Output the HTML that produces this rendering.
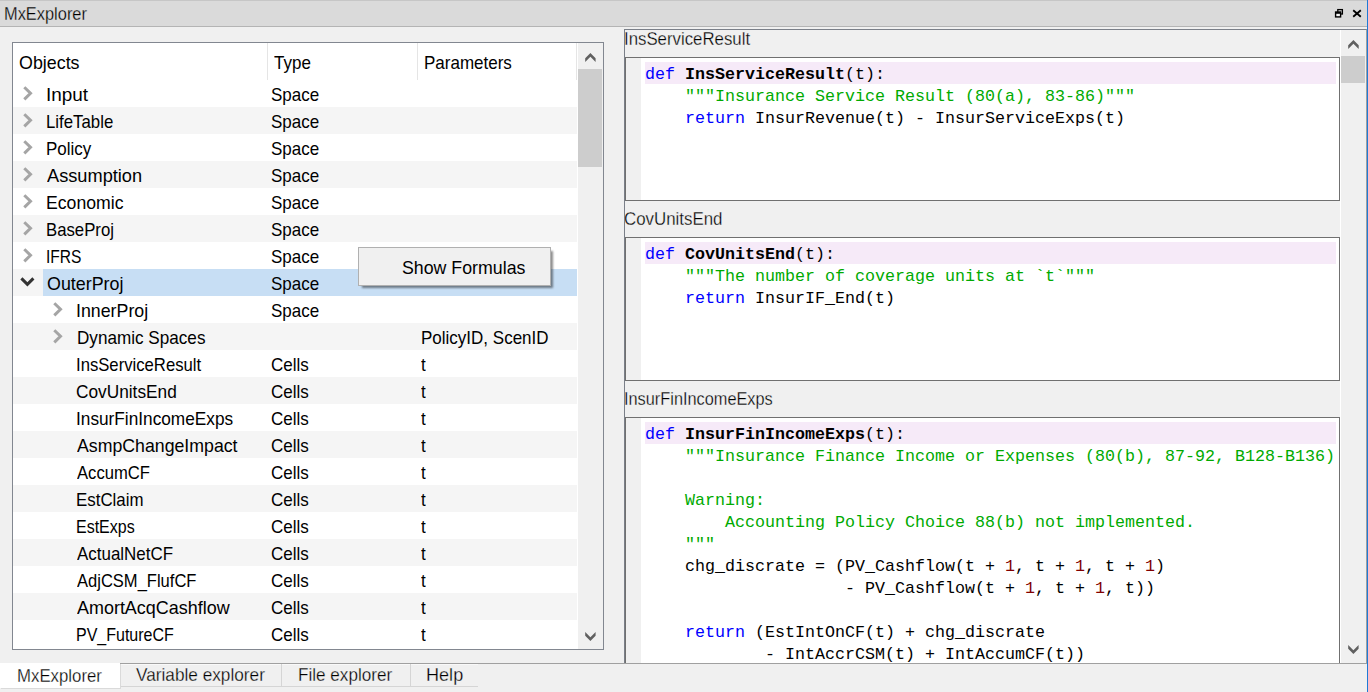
<!DOCTYPE html>
<html><head><meta charset="utf-8"><style>
*{box-sizing:border-box}
html,body{margin:0;padding:0}
body{width:1368px;height:692px;overflow:hidden;position:relative;background:#f0f0f0;font-family:"Liberation Sans",sans-serif;color:#000}
.abs{position:absolute}
#title{position:absolute;left:0;top:0;width:1367px;height:27px;background:#dadada;border-top:1px solid #c6c6c6;border-bottom:1px solid #b4b4b4}
#title .tx{position:absolute;left:4px;top:0px;font-size:16px;line-height:22px;color:#000;-webkit-text-stroke:0.25px #dadada;transform:scale(1.025,1.16);transform-origin:0 0}
#blue{position:absolute;left:1367px;top:0;width:1px;height:692px;background:#1f7ad6}
#tree{position:absolute;left:12px;top:42px;width:592px;height:608px;border:1px solid #828790;background:#fff;overflow:hidden}
#hdr{position:absolute;left:0;top:0;width:565px;height:37px;background:#fff}
#hdr .t{position:absolute;top:10px;transform:scaleY(1.08);transform-origin:0 0;font-size:17px;line-height:20px}
.csep{position:absolute;top:0;width:1px;height:37px;background:#e5e5e5}
.row{position:absolute;left:0;width:564px;height:27px;background:#fff}
.row.alt{background:#f5f5f5}
.row .t{position:absolute;top:5px;transform:scaleY(1.08);transform-origin:0 0;font-size:17px;line-height:20px;white-space:pre}
.sel{position:absolute;left:30px;top:0;width:534px;height:27px;background:#c7def4}
.ar{position:absolute;top:6px}
#vs1{position:absolute;left:565px;top:0;width:25px;height:606px;background:#f0f0f0}
#th1{position:absolute;left:0;top:26px;width:24px;height:98px;background:#cdcdcd}
#menu{position:absolute;left:358px;top:247px;width:193px;height:39px;background:#f0f0f0;border:1px solid #b0b0b0;box-shadow:3px 3px 2px -1px rgba(0,0,0,0.45)}
#menu .t{position:absolute;left:43px;top:10px;transform:scaleY(1.08);transform-origin:0 0;font-size:17px;line-height:20px}
#rp{position:absolute;left:624px;top:29px;width:743px;height:635px;border:1px solid #7a7f88;border-right:1px solid #a0a0a0;background:#f0f0f0}
.lbl{position:absolute;left:0px;font-size:16px;line-height:20px;white-space:pre;transform:scaleY(1.16);transform-origin:0 0;color:#000;-webkit-text-stroke:0.25px #f0f0f0}
.ed{position:absolute;left:0px;width:715px;border:1px solid #707070;background:#fff;overflow:hidden}
.gut{position:absolute;left:0;top:0;width:15px;height:100%;background:#f0f0f0}
.hl{position:absolute;left:19px;top:4px;width:691px;height:22px;background:#f6eaf8}
.code{position:absolute;left:19px;top:6px;margin:0;font-family:"Liberation Mono",monospace;font-size:17px;transform:scaleX(0.98039);transform-origin:0 0;line-height:22px;color:#000;white-space:pre}
.k{color:#0000ff;font-weight:normal}
.d{font-weight:bold}
.s{color:#00aa00;font-style:normal}
.n{color:#800000;font-style:normal}
#vs2{position:absolute;left:715px;top:0;width:26px;height:633px;background:#f0f0f0;border-left:1px solid #fff}
#th2{position:absolute;left:0px;top:26px;width:24px;height:27px;background:#cdcdcd}
#tabline{position:absolute;left:0;top:663px;width:1367px;height:1px;background:#a0a0a0}
.tab{position:absolute;top:663px;height:24px;border-top:1px solid #a0a0a0;border-bottom:1px solid #d5d5d5;background:#f0f0f0;box-shadow:inset 0 1px 0 #f9f9f9}
.tab .t{position:absolute;top:0px;font-size:16px;line-height:20px;white-space:pre;color:#000;-webkit-text-stroke:0.25px #f0f0f0;transform-origin:0 0}
#tab0{left:0;width:120px;height:25px;background:#fff;border:none;box-shadow:1px 1px 0 #dadada}
#tab0 .t{-webkit-text-stroke:0.25px #fff}
</style></head><body>
<div id="title"><span class="tx">MxExplorer</span>
<svg class="abs" style="left:1334px;top:7px" width="11" height="11" viewBox="0 0 11 11"><rect x="3.8" y="1.6" width="4.6" height="4.4" fill="none" stroke="#000" stroke-width="1.3"/><rect x="0.9" y="3.3" width="6.4" height="6.3" fill="#000"/><rect x="2.3" y="5.8" width="3.6" height="2.4" fill="#f4f4f4"/></svg>
<svg class="abs" style="left:1352px;top:8px" width="10" height="9" viewBox="0 0 10 9"><path d="M1.2 1.2L8.8 7.8M8.8 1.2L1.2 7.8" stroke="#000" stroke-width="1.8"/></svg>
</div>
<div id="blue"></div>
<div id="tree">
 <div id="hdr">
  <span class="t" style="left:6px;transform:scale(1.05,1.08)">Objects</span>
  <span class="t" style="left:261px">Type</span>
  <span class="t" style="left:411px">Parameters</span>
  <div class="csep" style="left:254px"></div>
  <div class="csep" style="left:404px"></div>
  <div class="csep" style="left:563px"></div>
 </div>
 <div class="row" style="top:37px"><svg class="ar" style="left:10px" width="12" height="16" viewBox="0 0 12 16"><path d="M1.3 1.2 L7.5 7.3 L1.3 13.4" fill="none" stroke="#a5a5a5" stroke-width="3"/></svg><span class="t" style="left:33.22px;transform:scale(1.1136,1.08)">Input</span><span class="t" style="left:258px">Space</span></div><div class="row alt" style="top:64px"><svg class="ar" style="left:10px" width="12" height="16" viewBox="0 0 12 16"><path d="M1.3 1.2 L7.5 7.3 L1.3 13.4" fill="none" stroke="#a5a5a5" stroke-width="3"/></svg><span class="t" style="left:33.20px;transform:scale(0.9878,1.08)">LifeTable</span><span class="t" style="left:258px">Space</span></div><div class="row" style="top:91px"><svg class="ar" style="left:10px" width="12" height="16" viewBox="0 0 12 16"><path d="M1.3 1.2 L7.5 7.3 L1.3 13.4" fill="none" stroke="#a5a5a5" stroke-width="3"/></svg><span class="t" style="left:32.96px;transform:scale(0.9980,1.08)">Policy</span><span class="t" style="left:258px">Space</span></div><div class="row alt" style="top:118px"><svg class="ar" style="left:10px" width="12" height="16" viewBox="0 0 12 16"><path d="M1.3 1.2 L7.5 7.3 L1.3 13.4" fill="none" stroke="#a5a5a5" stroke-width="3"/></svg><span class="t" style="left:34.10px;transform:scale(1.0709,1.08)">Assumption</span><span class="t" style="left:258px">Space</span></div><div class="row" style="top:145px"><svg class="ar" style="left:10px" width="12" height="16" viewBox="0 0 12 16"><path d="M1.3 1.2 L7.5 7.3 L1.3 13.4" fill="none" stroke="#a5a5a5" stroke-width="3"/></svg><span class="t" style="left:32.91px;transform:scale(1.0377,1.08)">Economic</span><span class="t" style="left:258px">Space</span></div><div class="row alt" style="top:172px"><svg class="ar" style="left:10px" width="12" height="16" viewBox="0 0 12 16"><path d="M1.3 1.2 L7.5 7.3 L1.3 13.4" fill="none" stroke="#a5a5a5" stroke-width="3"/></svg><span class="t" style="left:33.00px;transform:scale(0.9844,1.08)">BaseProj</span><span class="t" style="left:258px">Space</span></div><div class="row" style="top:199px"><svg class="ar" style="left:10px" width="12" height="16" viewBox="0 0 12 16"><path d="M1.3 1.2 L7.5 7.3 L1.3 13.4" fill="none" stroke="#a5a5a5" stroke-width="3"/></svg><span class="t" style="left:32.94px;transform:scale(0.9164,1.08)">IFRS</span><span class="t" style="left:258px">Space</span></div><div class="row alt" style="top:226px"><div class="sel"></div><svg class="ar" style="left:7px" width="16" height="13" viewBox="0 0 16 13"><path d="M1.4 3.4 L7.4 9.4 L13.4 3.4" fill="none" stroke="#333" stroke-width="3"/></svg><span class="t" style="left:33.60px;transform:scale(1.0498,1.08)">OuterProj</span><span class="t" style="left:258px">Space</span></div><div class="row" style="top:253px"><svg class="ar" style="left:40px" width="12" height="16" viewBox="0 0 12 16"><path d="M1.3 1.2 L7.5 7.3 L1.3 13.4" fill="none" stroke="#a5a5a5" stroke-width="3"/></svg><span class="t" style="left:62.63px;transform:scale(1.0459,1.08)">InnerProj</span><span class="t" style="left:258px">Space</span></div><div class="row alt" style="top:280px"><svg class="ar" style="left:40px" width="12" height="16" viewBox="0 0 12 16"><path d="M1.3 1.2 L7.5 7.3 L1.3 13.4" fill="none" stroke="#a5a5a5" stroke-width="3"/></svg><span class="t" style="left:63.57px;transform:scale(1.0070,1.08)">Dynamic Spaces</span><span class="t" style="left:408px">PolicyID, ScenID</span></div><div class="row" style="top:307px"><span class="t" style="left:62.73px;transform:scale(0.9810,1.08)">InsServiceResult</span><span class="t" style="left:258px">Cells</span><span class="t" style="left:408px">t</span></div><div class="row alt" style="top:334px"><span class="t" style="left:63.20px;transform:scale(1.0157,1.08)">CovUnitsEnd</span><span class="t" style="left:258px">Cells</span><span class="t" style="left:408px">t</span></div><div class="row" style="top:361px"><span class="t" style="left:62.68px;transform:scale(1.0141,1.08)">InsurFinIncomeExps</span><span class="t" style="left:258px">Cells</span><span class="t" style="left:408px">t</span></div><div class="row alt" style="top:388px"><span class="t" style="left:64.01px;transform:scale(1.0423,1.08)">AsmpChangeImpact</span><span class="t" style="left:258px">Cells</span><span class="t" style="left:408px">t</span></div><div class="row" style="top:415px"><span class="t" style="left:64.02px;transform:scale(0.9779,1.08)">AccumCF</span><span class="t" style="left:258px">Cells</span><span class="t" style="left:408px">t</span></div><div class="row alt" style="top:442px"><span class="t" style="left:62.89px;transform:scale(0.9925,1.08)">EstClaim</span><span class="t" style="left:258px">Cells</span><span class="t" style="left:408px">t</span></div><div class="row" style="top:469px"><span class="t" style="left:62.95px;transform:scale(0.9414,1.08)">EstExps</span><span class="t" style="left:258px">Cells</span><span class="t" style="left:408px">t</span></div><div class="row alt" style="top:496px"><span class="t" style="left:64.02px;transform:scale(0.9960,1.08)">ActualNetCF</span><span class="t" style="left:258px">Cells</span><span class="t" style="left:408px">t</span></div><div class="row" style="top:523px"><span class="t" style="left:64.02px;transform:scale(0.9727,1.08)">AdjCSM_FlufCF</span><span class="t" style="left:258px">Cells</span><span class="t" style="left:408px">t</span></div><div class="row alt" style="top:550px"><span class="t" style="left:64.01px;transform:scale(1.0558,1.08)">AmortAcqCashflow</span><span class="t" style="left:258px">Cells</span><span class="t" style="left:408px">t</span></div><div class="row" style="top:577px"><span class="t" style="left:62.95px;transform:scale(0.9413,1.08)">PV_FutureCF</span><span class="t" style="left:258px">Cells</span><span class="t" style="left:408px">t</span></div>
 <div id="vs1">
  <div id="th1"></div>
 </div>
</div>
<div id="menu"><span class="t" style="transform:scale(1.045,1.08)">Show Formulas</span></div>
<div id="rp">
 <span class="lbl" style="top:-2px;left:-1px;transform:scale(1.05,1.16)">InsServiceResult</span>
 <div class="ed" style="top:27px;height:144px"><div class="gut"></div><div class="hl"></div><pre class="code"><b class="k">def</b> <b class="d">InsServiceResult</b>(t):
    <i class="s">"""Insurance Service Result (80(a), 83-86)"""</i>
    <b class="k">return</b> InsurRevenue(t) - InsurServiceExps(t)</pre></div>
 <span class="lbl" style="top:178px;left:-1px;transform:scale(1.055,1.16)">CovUnitsEnd</span>
 <div class="ed" style="top:207px;height:144px"><div class="gut"></div><div class="hl"></div><pre class="code"><b class="k">def</b> <b class="d">CovUnitsEnd</b>(t):
    <i class="s">"""The number of coverage units at `t`"""</i>
    <b class="k">return</b> InsurIF_End(t)</pre></div>
 <span class="lbl" style="top:358px;left:-1px;transform:scale(1.02,1.16)">InsurFinIncomeExps</span>
 <div class="ed" style="top:387px;height:247px"><div class="gut"></div><div class="hl"></div><pre class="code"><b class="k">def</b> <b class="d">InsurFinIncomeExps</b>(t):
    <i class="s">"""Insurance Finance Income or Expenses (80(b), 87-92, B128-B136)</i>

    <i class="s">Warning:</i>
        <i class="s">Accounting Policy Choice 88(b) not implemented.</i>
    <i class="s">"""</i>
    chg_discrate = (PV_Cashflow(t + <i class="n">1</i>, t + <i class="n">1</i>, t + <i class="n">1</i>)
                    - PV_Cashflow(t + <i class="n">1</i>, t + <i class="n">1</i>, t))

    <b class="k">return</b> (EstIntOnCF(t) + chg_discrate
            - IntAccrCSM(t) + IntAccumCF(t))</pre></div>
 <div id="vs2">
  <div id="th2"></div>
 </div>
</div>
<div class="tab" style="left:120px;width:162px;border-right:1px solid #d5d5d5"><span class="t" style="left:16px;transform:scale(1.076,1.16)">Variable explorer</span></div>
<div class="tab" style="left:282px;width:129px;border-right:1px solid #d5d5d5"><span class="t" style="left:16px;transform:scale(1.07,1.16)">File explorer</span></div>
<div class="tab" style="left:411px;width:67px"><span class="t" style="left:15px;transform:scale(1.13,1.16)">Help</span></div>
<div id="tabline"></div>
<div class="tab" id="tab0"><span class="t" style="left:17px;top:2px;transform:scale(1.05,1.16)">MxExplorer</span></div>
<svg style="position:absolute;left:0;top:0" width="1368" height="692"><g fill="#606060">
<polygon points="1353.4,39.9 1358.7,45.3 1358.7,48.9 1353.4,43.7 1348.2,48.9 1348.2,45.3"/>
<polygon points="1348.2,644.9 1353.4,650.2 1358.6,644.9 1358.6,648.7 1353.4,653.9 1348.2,648.7"/>
<polygon points="590.4,52.9 595.6,58.3 595.6,61.9 590.4,56.7 585.2,61.9 585.2,58.3"/>
<polygon points="585.2,631.9 590.4,637.2 595.6,631.9 595.6,635.7 590.4,641 585.2,635.7"/>
</g></svg>
</body></html>
